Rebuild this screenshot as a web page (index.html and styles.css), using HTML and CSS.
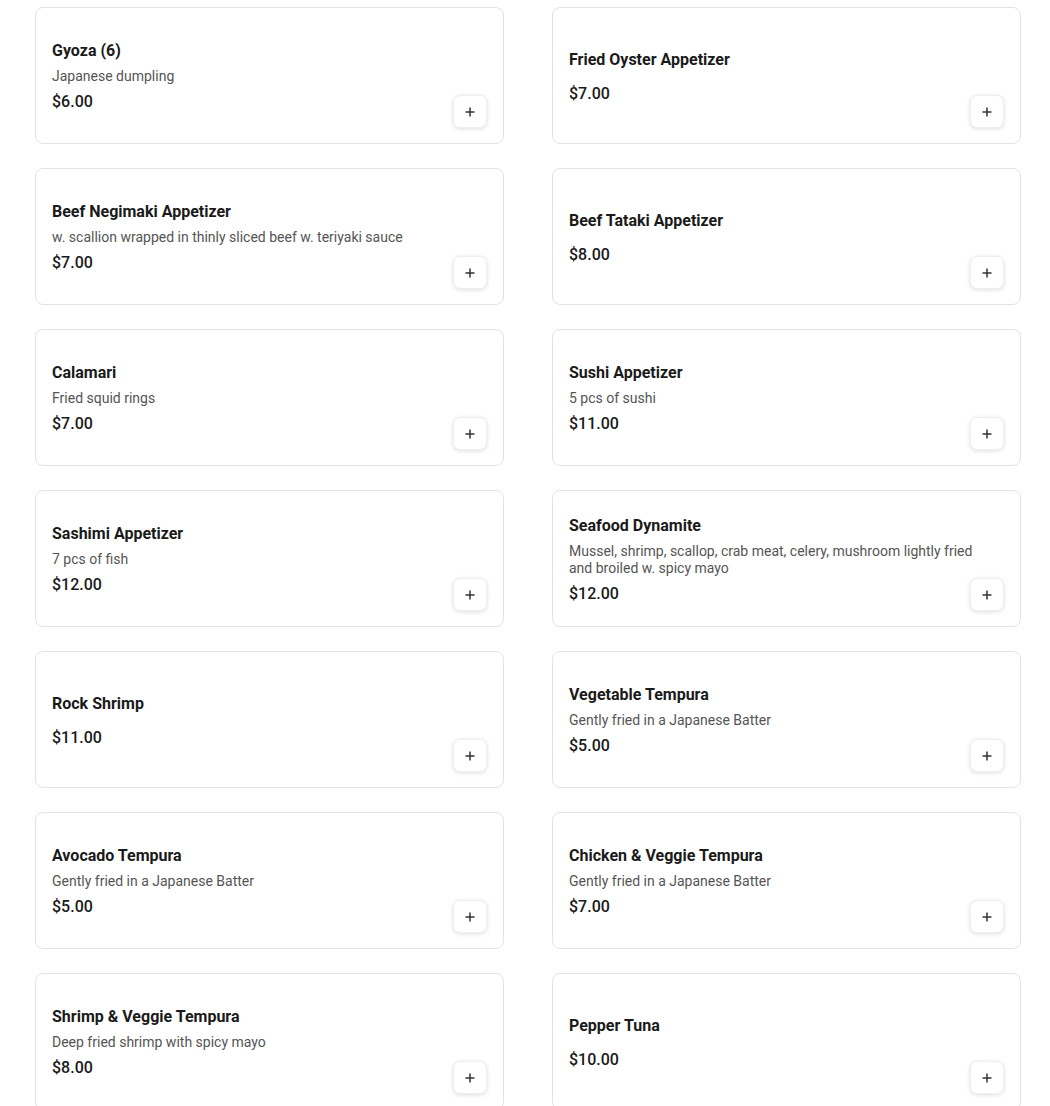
FILE: index.html
```html
<!DOCTYPE html>
<html lang="en">
<head>
    <meta charset="UTF-8">
    <meta name="viewport" content="width=device-width, initial-scale=1.0">
    <title>Appetizers</title>
    <link rel="stylesheet" href="styles.css">
</head>
<body>
    <div class="menu-grid">
        <div class="item-card">
            <div class="item-info">
                <h3>Gyoza (6)</h3>
                <p class="desc">Japanese dumpling</p>
                <p class="price">$6.00</p>
            </div>
            <button class="add-btn"><svg width="10" height="10" viewBox="0 0 10 10"><path d="M5 0.5v9M0.5 5h9" stroke="#333" stroke-width="1.5"/></svg></button>
        </div>
        <div class="item-card">
            <div class="item-info">
                <h3>Fried Oyster Appetizer</h3>
                <p class="price">$7.00</p>
            </div>
            <button class="add-btn"><svg width="10" height="10" viewBox="0 0 10 10"><path d="M5 0.5v9M0.5 5h9" stroke="#333" stroke-width="1.5"/></svg></button>
        </div>
        <div class="item-card">
            <div class="item-info">
                <h3>Beef Negimaki Appetizer</h3>
                <p class="desc">w. scallion wrapped in thinly sliced beef w. teriyaki sauce</p>
                <p class="price">$7.00</p>
            </div>
            <button class="add-btn"><svg width="10" height="10" viewBox="0 0 10 10"><path d="M5 0.5v9M0.5 5h9" stroke="#333" stroke-width="1.5"/></svg></button>
        </div>
        <div class="item-card">
            <div class="item-info">
                <h3>Beef Tataki Appetizer</h3>
                <p class="price">$8.00</p>
            </div>
            <button class="add-btn"><svg width="10" height="10" viewBox="0 0 10 10"><path d="M5 0.5v9M0.5 5h9" stroke="#333" stroke-width="1.5"/></svg></button>
        </div>
        <div class="item-card">
            <div class="item-info">
                <h3>Calamari</h3>
                <p class="desc">Fried squid rings</p>
                <p class="price">$7.00</p>
            </div>
            <button class="add-btn"><svg width="10" height="10" viewBox="0 0 10 10"><path d="M5 0.5v9M0.5 5h9" stroke="#333" stroke-width="1.5"/></svg></button>
        </div>
        <div class="item-card">
            <div class="item-info">
                <h3>Sushi Appetizer</h3>
                <p class="desc">5 pcs of sushi</p>
                <p class="price">$11.00</p>
            </div>
            <button class="add-btn"><svg width="10" height="10" viewBox="0 0 10 10"><path d="M5 0.5v9M0.5 5h9" stroke="#333" stroke-width="1.5"/></svg></button>
        </div>
        <div class="item-card">
            <div class="item-info">
                <h3>Sashimi Appetizer</h3>
                <p class="desc">7 pcs of fish</p>
                <p class="price">$12.00</p>
            </div>
            <button class="add-btn"><svg width="10" height="10" viewBox="0 0 10 10"><path d="M5 0.5v9M0.5 5h9" stroke="#333" stroke-width="1.5"/></svg></button>
        </div>
        <div class="item-card">
            <div class="item-info">
                <h3>Seafood Dynamite</h3>
                <p class="desc">Mussel, shrimp, scallop, crab meat, celery, mushroom lightly fried and broiled w. spicy mayo</p>
                <p class="price">$12.00</p>
            </div>
            <button class="add-btn"><svg width="10" height="10" viewBox="0 0 10 10"><path d="M5 0.5v9M0.5 5h9" stroke="#333" stroke-width="1.5"/></svg></button>
        </div>
        <div class="item-card">
            <div class="item-info">
                <h3>Rock Shrimp</h3>
                <p class="price">$11.00</p>
            </div>
            <button class="add-btn"><svg width="10" height="10" viewBox="0 0 10 10"><path d="M5 0.5v9M0.5 5h9" stroke="#333" stroke-width="1.5"/></svg></button>
        </div>
        <div class="item-card">
            <div class="item-info">
                <h3>Vegetable Tempura</h3>
                <p class="desc">Gently fried in a Japanese Batter</p>
                <p class="price">$5.00</p>
            </div>
            <button class="add-btn"><svg width="10" height="10" viewBox="0 0 10 10"><path d="M5 0.5v9M0.5 5h9" stroke="#333" stroke-width="1.5"/></svg></button>
        </div>
        <div class="item-card">
            <div class="item-info">
                <h3>Avocado Tempura</h3>
                <p class="desc">Gently fried in a Japanese Batter</p>
                <p class="price">$5.00</p>
            </div>
            <button class="add-btn"><svg width="10" height="10" viewBox="0 0 10 10"><path d="M5 0.5v9M0.5 5h9" stroke="#333" stroke-width="1.5"/></svg></button>
        </div>
        <div class="item-card">
            <div class="item-info">
                <h3>Chicken &amp; Veggie Tempura</h3>
                <p class="desc">Gently fried in a Japanese Batter</p>
                <p class="price">$7.00</p>
            </div>
            <button class="add-btn"><svg width="10" height="10" viewBox="0 0 10 10"><path d="M5 0.5v9M0.5 5h9" stroke="#333" stroke-width="1.5"/></svg></button>
        </div>
        <div class="item-card">
            <div class="item-info">
                <h3>Shrimp &amp; Veggie Tempura</h3>
                <p class="desc">Deep fried shrimp with spicy mayo</p>
                <p class="price">$8.00</p>
            </div>
            <button class="add-btn"><svg width="10" height="10" viewBox="0 0 10 10"><path d="M5 0.5v9M0.5 5h9" stroke="#333" stroke-width="1.5"/></svg></button>
        </div>
        <div class="item-card">
            <div class="item-info">
                <h3>Pepper Tuna</h3>
                <p class="price">$10.00</p>
            </div>
            <button class="add-btn"><svg width="10" height="10" viewBox="0 0 10 10"><path d="M5 0.5v9M0.5 5h9" stroke="#333" stroke-width="1.5"/></svg></button>
        </div>
    </div>
</body>
</html>
```

FILE: styles.css
```css
body {
    font-family: Roboto, "Liberation Sans", Arial, sans-serif;
    margin: 0;
    padding: 0;
    background-color: #fff;
    color: #1a1a1a;
}
.menu-grid {
    display: grid;
    grid-template-columns: 469px 469px;
    column-gap: 48px;
    row-gap: 24px;
    padding: 7px 0 0 35px;
}
.item-card {
    position: relative;
    box-sizing: border-box;
    height: 137px;
    display: flex;
    align-items: center;
    padding: 2px 16px 0;
    border: 1px solid #e3e3e3;
    border-radius: 8px;
    background-color: #fff;
}
.item-info {
    flex: 1;
    display: flex;
    flex-direction: column;
    padding-right: 16px;
}
.item-info h3 {
    margin: 0 0 7px;
    font-size: 16px;
    line-height: 20px;
    font-weight: 700;
    color: #1a1a1a;
}
.desc {
    margin: 0;
    font-size: 14px;
    line-height: 17px;
    color: #555;
}
.price {
    margin: 7px 0 0;
    font-size: 16px;
    line-height: 20px;
    font-weight: 500;
    color: #1a1a1a;
}
.add-btn {
    position: absolute;
    right: 16px;
    bottom: 15px;
    width: 34px;
    height: 33px;
    padding: 0;
    display: flex;
    align-items: center;
    justify-content: center;
    border: 1px solid #efefef;
    border-radius: 7px;
    background-color: #fff;
    box-shadow: 0 1px 4px rgba(0,0,0,0.13);
    cursor: pointer;
}
```
